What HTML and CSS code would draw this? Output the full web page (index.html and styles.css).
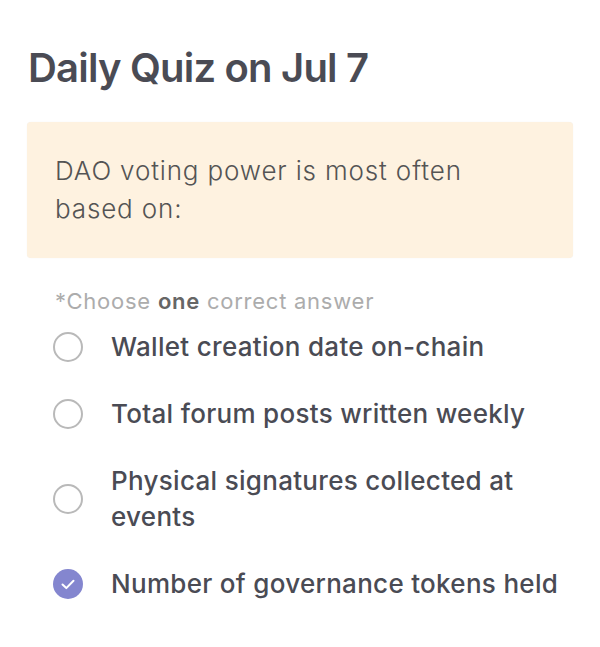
FILE: index.html
```html
<!DOCTYPE html>
<html>
<head>
<meta charset="utf-8">
<link rel="stylesheet" href="styles.css">
</head>
<body>
<main class="quiz">
  <h1 class="title">Daily Quiz on Jul 7</h1>
  <div class="question">DAO voting power is most often based on:</div>
  <p class="hint">*Choose <b>one</b> correct answer</p>
  <ul class="options">
    <li class="option"><span class="radio"></span><span class="label">Wallet creation date on-chain</span></li>
    <li class="option"><span class="radio"></span><span class="label">Total forum posts written weekly</span></li>
    <li class="option"><span class="radio"></span><span class="label">Physical signatures collected at events</span></li>
    <li class="option"><span class="radio checked"><svg viewBox="0 0 30 30" width="30" height="30"><path d="M9.5 15.5l3.8 3.6 7.2-7.4" fill="none" stroke="#fff" stroke-width="2" stroke-linecap="round" stroke-linejoin="round"/></svg></span><span class="label">Number of governance tokens held</span></li>
  </ul>
</main>
</body>
</html>
```
FILE: styles.css
```css
* { box-sizing: border-box; }
html, body { margin: 0; padding: 0; background: #fff; }
body { font-family: Inter, "Noto Sans", sans-serif; color: #4a4b54; }
.quiz { padding: 40px 27px 0 27px; width: 600px; }
.title {
  margin: 0 0 0 1px;
  font-size: 40px;
  font-weight: 600;
  line-height: 56px;
  color: #4a4b54;
  letter-spacing: -0.8px;
}
.question {
  margin-top: 26px;
  background: #fef2e0;
  border-radius: 4px;
  box-shadow: 0 0 1px rgba(0,0,0,0.08);
  padding: 30px 80px 30px 28px;
  font-size: 26px;
  font-weight: 300;
  line-height: 38px;
  letter-spacing: 0.85px;
  color: #545454;
  width: 546px;
}
.hint {
  margin: 30px 0 0 28px;
  font-size: 22px;
  line-height: 26px;
  letter-spacing: 0.75px;
  color: #acacac;
}
.hint b { color: #666; font-weight: 600; }
.options {
  list-style: none;
  margin: 15px 0 0 0;
  padding: 0 0 0 26px;
  display: flex;
  flex-direction: column;
  gap: 31px;
}
.option {
  display: flex;
  align-items: center;
  gap: 28px;
}
.radio {
  flex: none;
  width: 30px;
  height: 30px;
  border-radius: 50%;
  border: 2px solid #b9b9b9;
  display: flex;
  align-items: center;
  justify-content: center;
}
.radio.checked {
  border: none;
  background: #8486cf;
}
.label {
  font-size: 26px;
  font-weight: 500;
  line-height: 36px;
  letter-spacing: 0.3px;
  color: #4a4b54;
  max-width: 455px;
}
```
